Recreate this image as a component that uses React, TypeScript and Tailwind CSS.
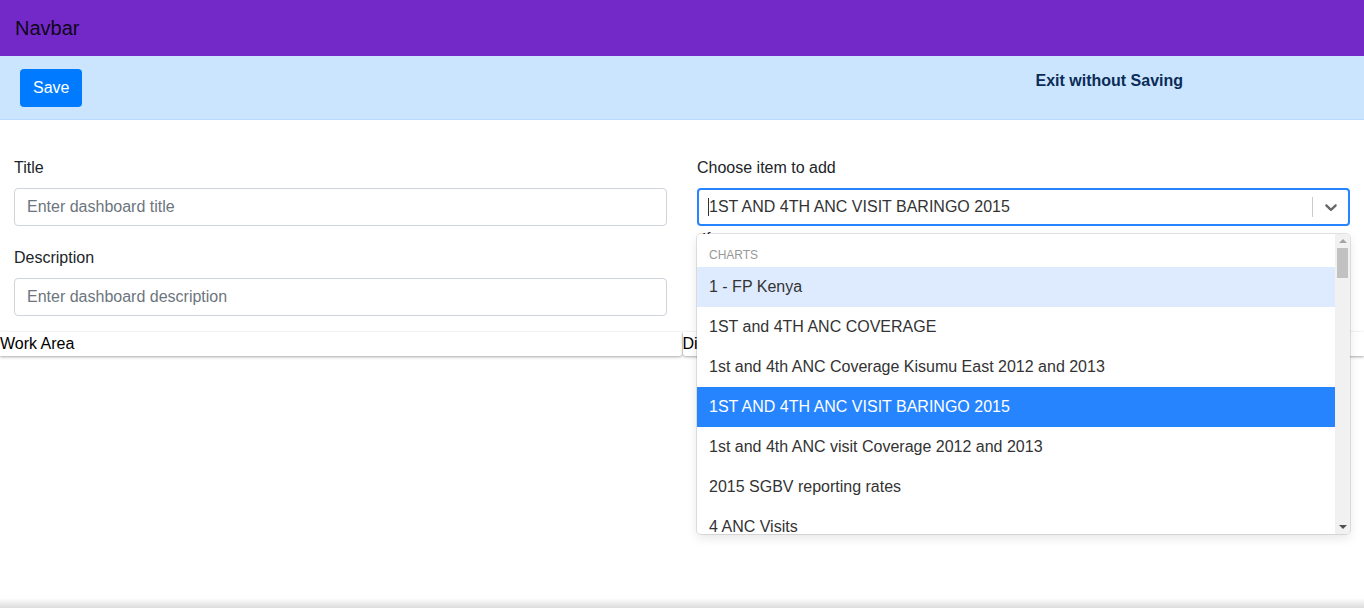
import { useState } from 'react';

const options = [
  '1 - FP Kenya',
  '1ST and 4TH ANC COVERAGE',
  '1st and 4th ANC Coverage Kisumu East 2012 and 2013',
  '1ST AND 4TH ANC VISIT BARINGO 2015',
  '1st and 4th ANC visit Coverage 2012 and 2013',
  '2015 SGBV reporting rates',
  '4 ANC Visits',
];

const Chevron = () => (
  <svg width="20" height="20" viewBox="0 0 20 20" fill="#666">
    <path d="M4.516 7.548c0.436-0.446 1.043-0.481 1.576 0l3.908 3.747 3.908-3.747c0.533-0.481 1.141-0.446 1.574 0 0.436 0.445 0.408 1.197 0 1.615-0.406 0.418-4.695 4.502-4.695 4.502-0.217 0.223-0.502 0.335-0.787 0.335s-0.57-0.112-0.789-0.335c0 0-4.287-4.084-4.695-4.502s-0.436-1.17 0-1.615z" />
  </svg>
);

const App = () => {
  const [selected] = useState(options[3]);
  const focused = options[0];

  return (
    <div className="h-[608px] flex flex-col bg-white text-[#212529] font-['Liberation_Sans',Arial,sans-serif] overflow-hidden">
      <nav className="h-14 shrink-0 bg-[#7229c8] flex items-center px-[15px]">
        <span className="text-[20px] text-black/90">Navbar</span>
      </nav>

      <div className="h-16 shrink-0 bg-[#cce5ff] border-b border-[#b8daff] flex items-start px-5 pt-[13px]">
        <button className="h-[38px] px-[13px] rounded-[4px] bg-[#007bff] text-white text-base">
          Save
        </button>
        <div className="ml-[953px] font-bold text-base leading-6 text-[#0a2c57]">
          Exit without Saving
        </div>
      </div>

      <div className="grid grid-cols-2 gap-[30px] px-[14px] pt-[36px]">
        <div>
          <label className="block text-base leading-6 mb-2">Title</label>
          <input
            className="w-full h-[38px] px-3 border border-[#ced4da] rounded-[4px] text-base placeholder:text-[#6c757d] outline-none"
            placeholder="Enter dashboard title"
          />
          <label className="block text-base leading-6 mt-[20px] mb-2">Description</label>
          <input
            className="w-full h-[38px] px-3 border border-[#ced4da] rounded-[4px] text-base placeholder:text-[#6c757d] outline-none"
            placeholder="Enter dashboard description"
          />
        </div>

        <div className="relative z-10">
          <label className="block text-base leading-6 mb-2">Choose item to add</label>
          <div className="relative">
            <div className="h-[38px] flex items-center border-2 border-[#2684ff] rounded-[4px] bg-white">
              <div className="flex-1 flex items-center pl-[9px] text-base text-[#333]">
                <span className="w-px h-[18px] bg-[#333]" />
                <span>{selected}</span>
              </div>
              <span className="w-px h-[20px] bg-[#ccc]" />
              <div className="w-[35px] flex justify-center">
                <Chevron />
              </div>
            </div>
            <div className="pl-[5px] text-[15px] leading-4 mt-[4px]">If</div>

            <div className="absolute left-0 right-0 top-[46px] h-[300px] bg-white rounded-[4px] shadow-[0_0_0_1px_rgba(0,0,0,0.1),0_4px_11px_rgba(0,0,0,0.1)] flex overflow-hidden">
              <div className="flex-1 overflow-hidden pt-1">
                <div className="pt-2">
                  <div className="px-3 text-[12px] leading-[18px] uppercase text-[#999] mb-[3px]">Charts</div>
                  {options.map((opt) => (
                    <div
                      key={opt}
                      className={
                        opt === selected
                          ? 'h-10 px-3 flex items-center text-base bg-[#2684ff] text-white'
                          : opt === focused
                          ? 'h-10 px-3 flex items-center text-base bg-[#deebff] text-[#333]'
                          : 'h-10 px-3 flex items-center text-base text-[#333]'
                      }
                    >
                      {opt}
                    </div>
                  ))}
                </div>
              </div>
              <div className="w-[15px] bg-[#f1f1f1] flex flex-col items-center">
                <div className="h-[14px] flex items-center justify-center">
                  <span className="w-0 h-0 border-x-[4px] border-x-transparent border-b-[4px] border-b-[#a3a3a3]" />
                </div>
                <div className="w-[11px] h-[30px] bg-[#c1c1c1]" />
                <div className="flex-1" />
                <div className="h-[14px] flex items-center justify-center">
                  <span className="w-0 h-0 border-x-[4px] border-x-transparent border-t-[4px] border-t-[#505050]" />
                </div>
              </div>
            </div>
          </div>
        </div>
      </div>

      <div className="grid grid-cols-2 gap-px mt-4">
        <div className="h-6 bg-white rounded-br-[3px] shadow-[0_1px_3px_rgba(0,0,0,0.35)] text-base leading-6 text-black">
          Work Area
        </div>
        <div className="h-6 bg-white rounded-bl-[3px] shadow-[0_1px_3px_rgba(0,0,0,0.35)] text-base leading-6 text-black">
          Display
        </div>
      </div>

      <div className="flex-1" />
      <div className="h-[10px] shrink-0 bg-linear-to-b from-white to-[#dcdcdc]" />
    </div>
  );
};

export default App;
